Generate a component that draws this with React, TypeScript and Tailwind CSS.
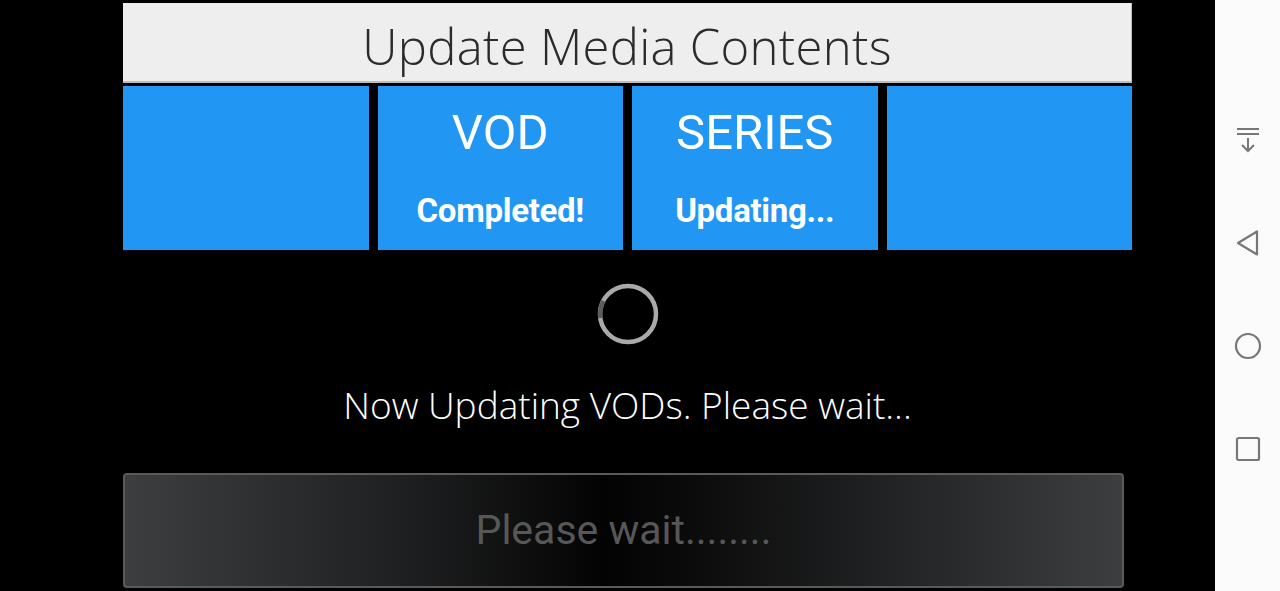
const tiles = [
  { title: '', status: '' },
  { title: 'VOD', status: 'Completed!' },
  { title: 'SERIES', status: 'Updating...' },
  { title: '', status: '' },
];

function Spinner() {
  return (
    <svg width="64" height="64" viewBox="0 0 64 64">
      <circle cx="32" cy="32" r="28" fill="none" stroke="#a9a9a9" strokeWidth="4.5" />
      <path d="M4.5 36 A28 28 0 0 1 7.5 19" fill="none" stroke="#5c5c5c" strokeWidth="4.5" />
    </svg>
  );
}

function NavBar() {
  return (
    <div className="flex h-full w-[65px] shrink-0 flex-col items-center bg-[#fbfbfb] pt-[126px]">
      <svg width="26" height="28" viewBox="0 0 26 28" className="mb-[75px]">
        <path d="M2 3h22M2 8h22M13 12v13M7 19l6 6 6-6" fill="none" stroke="#777" strokeWidth="2" />
      </svg>
      <svg width="26" height="28" viewBox="0 0 26 28" className="mb-[75px]">
        <path d="M22 2.5v23L3 14z" fill="none" stroke="#777" strokeWidth="2.2" strokeLinejoin="round" />
      </svg>
      <svg width="28" height="28" viewBox="0 0 28 28" className="mb-[76px]">
        <circle cx="14" cy="14" r="12" fill="none" stroke="#777" strokeWidth="2.2" />
      </svg>
      <svg width="26" height="26" viewBox="0 0 26 26">
        <rect x="2" y="2" width="22" height="22" rx="1.5" fill="none" stroke="#777" strokeWidth="2.2" />
      </svg>
    </div>
  );
}

export default function App() {
  return (
    <div className="flex h-[591px] w-[1280px] overflow-hidden bg-black">
      <main className="flex w-[1215px] shrink-0 flex-col pl-[123px] pr-[83px] pt-[3px]">
        <div className="flex h-[80px] w-[1009px] items-center justify-center border-b-2 border-r border-[#bdbdbd] bg-[#eeeeee] pt-[8px]">
          <h1 className="font-['Open_Sans',sans-serif] text-[49px] font-light leading-[60px] tracking-[0.3px] text-[#2b2b2b]">
            Update Media Contents
          </h1>
        </div>
        <div className="mt-[3px] grid h-[164px] w-[1009px] grid-cols-4 gap-[9px]">
          {tiles.map((t, i) => (
            <div key={i} className="flex flex-col items-center bg-[#2196f3] font-['Roboto',sans-serif] text-white">
              {t.title && (
                <>
                  <div className="mt-[18px] text-[49px] leading-[58px]">{t.title}</div>
                  <div className="mt-[29px] text-[33px] font-bold leading-[40px] tracking-[-0.3px]">{t.status}</div>
                </>
              )}
            </div>
          ))}
        </div>
        <div className="mt-[32px] flex w-[1009px] justify-center">
          <Spinner />
        </div>
        <p className="mt-[37px] w-[1009px] text-center font-['Open_Sans',sans-serif] text-[37px] font-light leading-[44px] text-white">
          Now Updating VODs. Please wait...
        </p>
        <div className="mt-[46px] flex h-[115px] w-[1001px] shrink-0 items-center justify-center rounded-[4px] border-2 border-[#5a5a5a] bg-[linear-gradient(90deg,#3d3e40_0%,#1c1d1e_30%,#030303_48%,#0a0a0a_56%,#1c1d1e_72%,#3d3e40_100%)]">
          <span className="font-['Roboto',sans-serif] text-[41px] text-[#575757]">Please wait........</span>
        </div>
      </main>
      <NavBar />
    </div>
  );
}
